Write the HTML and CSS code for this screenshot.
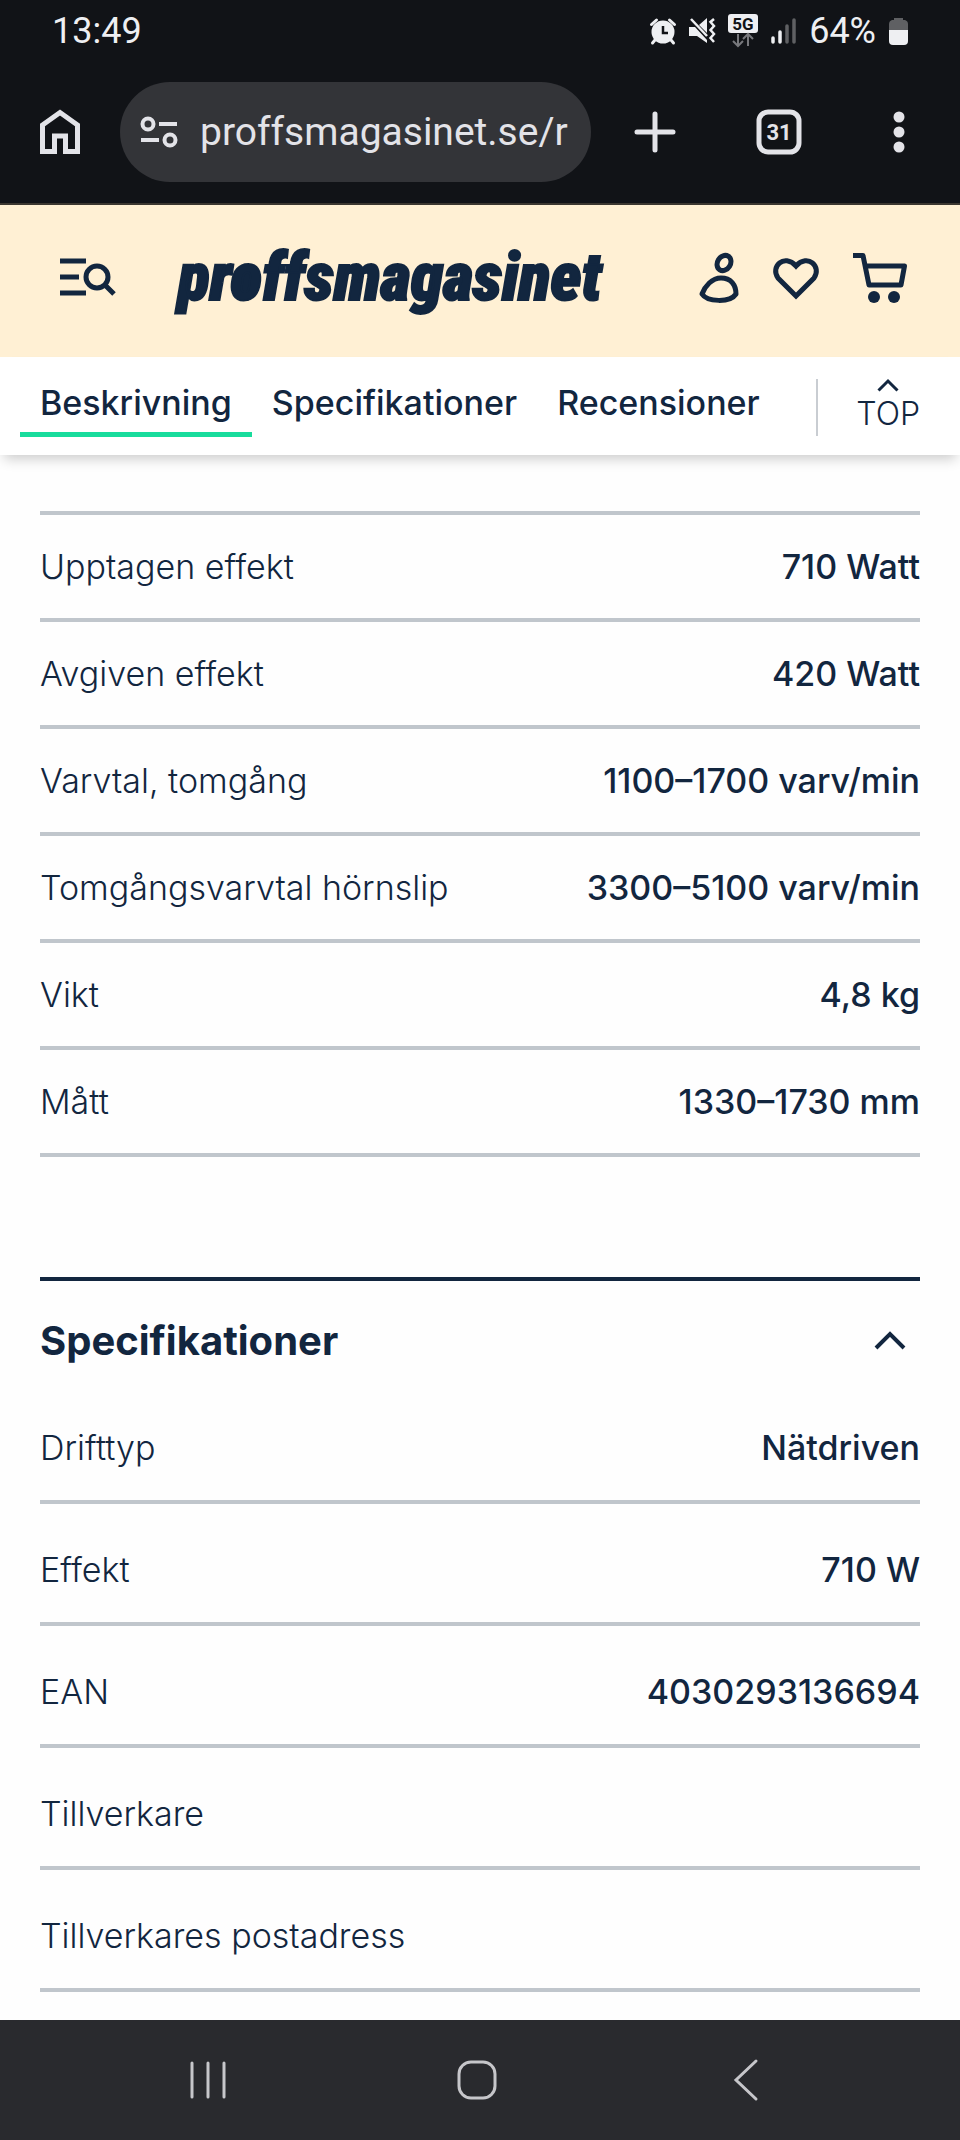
FILE: index.html
```html
<!DOCTYPE html>
<html lang="sv">
<head>
    <meta charset="UTF-8">
    <meta name="viewport" content="width=device-width, initial-scale=1.0">
    <title>Proffsmagasinet</title>
    <link rel="stylesheet" href="styles.css">
</head>

<body>
    <div id="browser">
        <div class="status-bar">
            <span>13:49</span>
            <div class="status-icons">
                <svg width="26" height="26" viewBox="0 0 26 26" aria-hidden="true">
                    <path d="M1.500 6.500L6.500 2M24.500 6.500L19.500 2M5 22L2.500 25M21 22L23.500 25" stroke="#eeeff2" stroke-width="3" stroke-linecap="round"/>
                    <circle cx="13" cy="14" r="11.500" fill="#eeeff2"/>
                    <path d="M13 8V15H18" fill="none" stroke="#111317" stroke-width="2.500"/>
                </svg>
                <svg width="26" height="26" viewBox="0 0 26 26" aria-hidden="true">
                    <path d="M0 9H6L18 22V25L8 18H0ZM10 7L18 0V15Z" fill="#eeeff2"/>
                    <path d="M2 1L18 18" stroke="#eeeff2" stroke-width="2.500"/>
                    <path d="M25 1L21.500 4L25 8L21.500 12L25 16L21.500 20L25 24" fill="none" stroke="#eeeff2" stroke-width="2.500"/>
                </svg>
                <svg width="30" height="34" viewBox="0 0 30 34" aria-hidden="true">
                    <rect width="30" height="19" rx="3" fill="#eeeff2"/>
                    <text class="network-text" x="15" y="16" text-anchor="middle">5G</text>
                    <path d="M10 20V32M5 27L10 32L15 27M20 32V20M15 25L20 20L25 25" fill="none" stroke="#77787c" stroke-width="2"/>
                </svg>
                <svg width="25" height="26" viewBox="0 0 25 26" aria-hidden="true">
                    <path d="M2 20V24M9 14V24" stroke="#eeeff2" stroke-width="3.500" stroke-linecap="round"/>
                    <path d="M16 8V24M23 2V24" stroke="#5f6063" stroke-width="3.500" stroke-linecap="round"/>
                </svg>
                <span>64%</span>
                <svg width="19" height="28" viewBox="0 0 19 28" aria-hidden="true">
                    <path d="M5 3V1H14V3H16Q19 4 19 7V14H0V7Q0 4 3 3Z" fill="#5f6063"/>
                    <path d="M0 13H19V24Q19 28 15 28H4Q0 28 0 24Z" fill="#eeeff2"/>
                </svg>
            </div>
        </div>

        <div class="toolbar">
            <button type="button" aria-label="Startsida">
                <svg width="40" height="46" viewBox="0 0 40 46">
                    <path d="M2.500 42.500V16L20 3.500L37.500 16V42.500H25.500V27H14.500V42.500Z" fill="none" stroke="#e3e3e8" stroke-width="5"/>
                </svg>
            </button>
            <div class="address">
                <svg width="38" height="32" viewBox="0 0 38 32" aria-hidden="true">
                    <g fill="none" stroke="#e3e3e8" stroke-width="4">
                        <circle cx="8" cy="8" r="5.500"/>
                        <circle cx="30" cy="24" r="5.500"/>
                        <path d="M19 8H37M1 24H19"/>
                    </g>
                </svg>
                <input type="text" value="proffsmagasinet.se/r" aria-label="Webbadress">
            </div>
            <div class="toolbar-actions">
                <button type="button" aria-label="Ny flik">
                    <svg width="48" height="48" viewBox="0 0 48 48">
                        <path d="M24 6V42M6 24H42" stroke="#e3e3e8" stroke-width="5" stroke-linecap="round"/>
                    </svg>
                </button>
                <button type="button" aria-label="Flikar">
                    <svg width="48" height="48" viewBox="0 0 48 48">
                        <rect x="4" y="4" width="40" height="40" rx="9" fill="none" stroke="#e3e3e8" stroke-width="5"/>
                        <text class="tab-count" x="24" y="32" text-anchor="middle">31</text>
                    </svg>
                </button>
                <button type="button" aria-label="Meny">
                    <svg width="40" height="48" viewBox="0 0 40 48">
                        <g fill="#e3e3e8">
                            <circle cx="20" cy="9" r="5.500"/>
                            <circle cx="20" cy="24" r="5.500"/>
                            <circle cx="20" cy="39" r="5.500"/>
                        </g>
                    </svg>
                </button>
            </div>
        </div>
    </div> <!-- end browser -->

    <div id="header">
        <button type="button" aria-label="Meny och sök">
            <svg width="56" height="50" viewBox="0 0 56 50">
                <g fill="none" stroke="#12263f" stroke-width="5">
                    <path d="M0 8H26M0 24H19M0 40H26M45 32L54 41"/>
                    <circle cx="37" cy="24" r="11"/>
                </g>
            </svg>
        </button>
        <a class="logo" href="#">pr<span class="logo-o">o</span>ffsmagasinet</a>
        <div class="header-links">
            <a href="#" aria-label="Mina sidor">
                <svg width="40" height="50" viewBox="0 0 40 50">
                    <g fill="none" stroke="#12263f" stroke-width="5">
                        <ellipse cx="25" cy="10" rx="6.500" ry="8" transform="rotate(32 25 10)"/>
                        <path d="M22 25C13 25 6 33 3 41C8 49 31 50 37 41C37 32 32 25 22 25Z" stroke-linejoin="round"/>
                    </g>
                </svg>
            </a>
            <a href="#" aria-label="Favoriter">
                <svg width="48" height="50" viewBox="0 0 48 50">
                    <path d="M24 43L6 25C-2 14 12 0 24 13C36 0 50 14 42 25Z" fill="none" stroke="#12263f" stroke-width="5"/>
                </svg>
            </a>
            <a href="#" aria-label="Kundvagn">
                <svg width="54" height="50" viewBox="0 0 54 50">
                    <path d="M0 2.500H10L16 32H48L51.500 13H12" fill="none" stroke="#12263f" stroke-width="5" stroke-linejoin="round"/>
                    <circle cx="21" cy="44" r="6" fill="#12263f"/>
                    <circle cx="41" cy="44" r="6" fill="#12263f"/>
                </svg>
            </a>
        </div>
    </div>

    <div id="nav">
        <ul>
            <li><a class="active" href="#beskrivning">Beskrivning</a></li>
            <li><a href="#specifikationer">Specifikationer</a></li>
            <li><a href="#recensioner">Recensioner</a></li>
        </ul>
        <a class="to-top" href="#header">
            <svg width="22" height="13" viewBox="0 0 22 13" aria-hidden="true">
                <path d="M1.500 11.500L11 2L20.500 11.500" fill="none" stroke="#12263f" stroke-width="3"/>
            </svg>
            <span>TOP</span>
        </a>
    </div>

    <div id="content">
        <table class="facts" id="beskrivning">
            <tr><th scope="row">Upptagen effekt</th><td>710 Watt</td></tr>
            <tr><th scope="row">Avgiven effekt</th><td>420 Watt</td></tr>
            <tr><th scope="row">Varvtal, tomgång</th><td>1100–1700 varv/min</td></tr>
            <tr><th scope="row">Tomgångsvarvtal hörnslip</th><td>3300–5100 varv/min</td></tr>
            <tr><th scope="row">Vikt</th><td>4,8 kg</td></tr>
            <tr><th scope="row">Mått</th><td>1330–1730 mm</td></tr>
        </table>

        <div class="section" id="specifikationer">
            <h2>
                <button type="button" aria-expanded="true">
                    Specifikationer
                    <svg width="32" height="20" viewBox="0 0 32 20" aria-hidden="true">
                        <path d="M2 17L16 3L30 17" fill="none" stroke="#12263f" stroke-width="4"/>
                    </svg>
                </button>
            </h2>
            <table class="specs">
                <tr><th scope="row">Drifttyp</th><td>Nätdriven</td></tr>
                <tr><th scope="row">Effekt</th><td>710 W</td></tr>
                <tr><th scope="row">EAN</th><td>4030293136694</td></tr>
                <tr><th scope="row">Tillverkare</th><td></td></tr>
                <tr><th scope="row">Tillverkares postadress</th><td></td></tr>
            </table>
        </div>
    </div> <!-- end content -->

    <div id="system-nav">
        <button type="button" aria-label="Senaste appar">
            <svg width="40" height="40" viewBox="0 0 40 40">
                <path d="M4 3V37M20 3V37M36 3V37" stroke="#c6c6ca" stroke-width="3" stroke-linecap="round"/>
            </svg>
        </button>
        <button type="button" aria-label="Hem">
            <svg width="40" height="40" viewBox="0 0 40 40">
                <rect x="2" y="2" width="36" height="36" rx="12" fill="none" stroke="#c6c6ca" stroke-width="3"/>
            </svg>
        </button>
        <button type="button" aria-label="Tillbaka">
            <svg width="40" height="40" viewBox="0 0 40 40">
                <path d="M30 1L10 20L30 39" fill="none" stroke="#c6c6ca" stroke-width="3" stroke-linecap="round"/>
            </svg>
        </button>
    </div>
</body>

</html>
```

FILE: styles.css
```css
/* General Styles */
* {
    box-sizing: border-box;
}

body, h2, ul, li {
    margin: 0;
    padding: 0;
}

body {
    display: flex;
    flex-direction: column;
    min-height: 100vh;
    background: #fefefe;
    color: #12263f;
    font-family: Inter, sans-serif;
    font-size: 34px;
    line-height: 48px;
}

a {
    color: inherit;
    text-decoration: none;
}

button {
    margin: 0;
    padding: 0;
    border: 0;
    background: none;
    color: inherit;
    font: inherit;
}

svg {
    display: block;
    overflow: visible;
}

/* Browser Styles */
#browser {
    background: #111317;
    border-bottom: 2px solid #3b3730;
    color: #eeeff2;
    font-family: Roboto, sans-serif;
}

.status-bar {
    display: flex;
    justify-content: space-between;
    height: 62px;
    padding: 0 52px;
    font-size: 36px;
    line-height: 62px;
}

.status-icons {
    display: flex;
    align-items: center;
    gap: 13px;
}

.network-text {
    fill: #111317;
    font-size: 17px;
    font-weight: 700;
}

.toolbar {
    display: flex;
    align-items: center;
    gap: 40px;
    padding: 20px 41px 21px 40px;
}

.address {
    display: flex;
    flex: 1;
    align-items: center;
    gap: 22px;
    height: 100px;
    min-width: 0;
    padding: 0 12px 0 20px;
    border-radius: 50px;
    background: #333438;
}

.address input {
    flex: 1;
    min-width: 0;
    padding: 0;
    border: 0;
    background: none;
    color: #e3e3e8;
    font-family: Roboto, sans-serif;
    font-size: 39px;
}

.toolbar-actions {
    display: flex;
    gap: 76px;
}

.tab-count {
    fill: #e3e3e8;
    font-size: 22px;
    font-weight: 700;
}

/* Header Styles */
#header {
    display: flex;
    align-items: center;
    height: 152px;
    padding: 0 53px 6px 60px;
    background: #fff0d4;
}

.logo {
    margin-left: 62px;
    font-family: "Roboto Condensed", Roboto, sans-serif;
    font-size: 66px;
    font-weight: 900;
    font-style: italic;
    line-height: 80px;
    -webkit-text-stroke: 2px #12263f;
}

/* The o is a solid disc in the logo */
.logo-o {
    background: radial-gradient(ellipse 8px 16px at 50% 60%, #12263f 98%, transparent);
}

.header-links {
    display: flex;
    gap: 33px;
    margin-left: auto;
}

/* Navigation Styles */
#nav {
    display: flex;
    align-items: center;
    justify-content: space-between;
    padding: 20px 40px 18px 20px;
    background: #ffffff;
    box-shadow: 0 8px 12px -4px rgba(0, 0, 0, 0.2);
    font-weight: 500;
}

#nav ul {
    display: flex;
    list-style: none;
}

#nav li a {
    display: block;
    padding: 2px 20px 5px;
    border-bottom: 5px solid transparent;
}

#nav li a.active {
    border-color: #18dc9c;
}

.to-top {
    display: flex;
    flex-direction: column;
    align-items: center;
    padding-left: 38px;
    border-left: 2px solid #c9cdd2;
    font-size: 32px;
    font-weight: 300;
    line-height: 44px;
}

/* Content Styles */
#content {
    flex: 1;
    padding: 56px 40px 28px;
}

table {
    width: 100%;
    border-spacing: 0;
}

th, td {
    border-bottom: 4px solid #c0c6cc;
}

th {
    padding: 0;
    font-weight: 350;
    text-align: left;
}

td {
    padding: 0;
    font-weight: 500;
    text-align: right;
}

.facts {
    border-top: 4px solid #c0c6cc;
}

.facts th, .facts td {
    height: 107px;
}

.section {
    margin-top: 120px;
    border-top: 4px solid #12263f;
}

.section h2 {
    font-size: 40px;
    font-weight: 700;
}

.section h2 button {
    display: flex;
    align-items: center;
    justify-content: space-between;
    width: 100%;
    height: 119px;
    padding-right: 14px;
}

.specs th, .specs td {
    padding: 42px 0 28px;
}

.specs tr:first-child th, .specs tr:first-child td {
    padding-top: 24px;
}

/* System Navigation Styles */
#system-nav {
    display: flex;
    align-items: center;
    justify-content: space-between;
    height: 120px;
    padding: 0 194px 0 188px;
    background: #292a2e;
}
```
